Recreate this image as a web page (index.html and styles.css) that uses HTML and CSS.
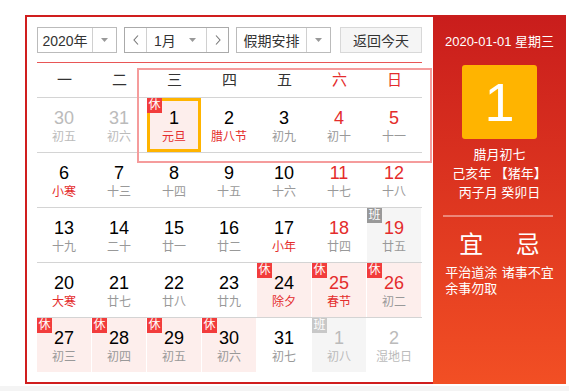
FILE: index.html
```html
<!DOCTYPE html>
<html lang="zh-CN">
<head>
<meta charset="utf-8">
<title>万年历</title>
<link rel="stylesheet" href="styles.css">
</head>
<body>
<div class="page">
  <div class="calendar">
    <div class="main">
      <div class="toolbar">
        <div class="sel year">
          <span class="sel-text">2020年</span>
          <span class="sel-arrow"><svg width="7" height="4" viewBox="0 0 7 4"><polygon points="0,0 7,0 3.5,4" fill="#999"/></svg></span>
        </div>
        <div class="sel month">
          <span class="nav prev"><svg width="6" height="10" viewBox="0 0 6 10"><polyline points="5,0.5 1,5 5,9.5" fill="none" stroke="#777" stroke-width="1.1"/></svg></span>
          <span class="month-mid"><span>1月</span><svg width="7" height="4" viewBox="0 0 7 4"><polygon points="0,0 7,0 3.5,4" fill="#999"/></svg></span>
          <span class="nav next"><svg width="6" height="10" viewBox="0 0 6 10"><polyline points="1,0.5 5,5 1,9.5" fill="none" stroke="#777" stroke-width="1.1"/></svg></span>
        </div>
        <div class="sel holiday">
          <span class="sel-text">假期安排</span>
          <span class="sel-arrow"><svg width="7" height="4" viewBox="0 0 7 4"><polygon points="0,0 7,0 3.5,4" fill="#999"/></svg></span>
        </div>
        <div class="btn-today">返回今天</div>
      </div>

      <div class="weekhead">
        <span>一</span><span>二</span><span>三</span><span>四</span><span>五</span><span class="red">六</span><span class="red">日</span>
      </div>

      <div class="week">
        <div class="cell other"><span class="num">30</span><span class="lun">初五</span></div>
        <div class="cell other"><span class="num">31</span><span class="lun">初六</span></div>
        <div class="cell rest selected"><i class="badge">休</i><span class="num">1</span><span class="lun red">元旦</span></div>
        <div class="cell"><span class="num">2</span><span class="lun red">腊八节</span></div>
        <div class="cell"><span class="num">3</span><span class="lun">初九</span></div>
        <div class="cell"><span class="num red">4</span><span class="lun">初十</span></div>
        <div class="cell"><span class="num red">5</span><span class="lun">十一</span></div>
      </div>
      <div class="week">
        <div class="cell"><span class="num">6</span><span class="lun red">小寒</span></div>
        <div class="cell"><span class="num">7</span><span class="lun">十三</span></div>
        <div class="cell"><span class="num">8</span><span class="lun">十四</span></div>
        <div class="cell"><span class="num">9</span><span class="lun">十五</span></div>
        <div class="cell"><span class="num">10</span><span class="lun">十六</span></div>
        <div class="cell"><span class="num red">11</span><span class="lun">十七</span></div>
        <div class="cell"><span class="num red">12</span><span class="lun">十八</span></div>
      </div>
      <div class="week">
        <div class="cell"><span class="num">13</span><span class="lun">十九</span></div>
        <div class="cell"><span class="num">14</span><span class="lun">二十</span></div>
        <div class="cell"><span class="num">15</span><span class="lun">廿一</span></div>
        <div class="cell"><span class="num">16</span><span class="lun">廿二</span></div>
        <div class="cell"><span class="num">17</span><span class="lun red">小年</span></div>
        <div class="cell"><span class="num red">18</span><span class="lun">廿四</span></div>
        <div class="cell work"><i class="badge">班</i><span class="num red">19</span><span class="lun">廿五</span></div>
      </div>
      <div class="week">
        <div class="cell"><span class="num">20</span><span class="lun red">大寒</span></div>
        <div class="cell"><span class="num">21</span><span class="lun">廿七</span></div>
        <div class="cell"><span class="num">22</span><span class="lun">廿八</span></div>
        <div class="cell"><span class="num">23</span><span class="lun">廿九</span></div>
        <div class="cell rest"><i class="badge">休</i><span class="num">24</span><span class="lun red">除夕</span></div>
        <div class="cell rest"><i class="badge">休</i><span class="num red">25</span><span class="lun red">春节</span></div>
        <div class="cell rest"><i class="badge">休</i><span class="num red">26</span><span class="lun">初二</span></div>
      </div>
      <div class="week last">
        <div class="cell rest"><i class="badge">休</i><span class="num">27</span><span class="lun">初三</span></div>
        <div class="cell rest"><i class="badge">休</i><span class="num">28</span><span class="lun">初四</span></div>
        <div class="cell rest"><i class="badge">休</i><span class="num">29</span><span class="lun">初五</span></div>
        <div class="cell rest"><i class="badge">休</i><span class="num">30</span><span class="lun">初六</span></div>
        <div class="cell"><span class="num">31</span><span class="lun">初七</span></div>
        <div class="cell other work"><i class="badge light">班</i><span class="num">1</span><span class="lun">初八</span></div>
        <div class="cell other"><span class="num">2</span><span class="lun">湿地日</span></div>
      </div>

      <div class="week-mark"></div>
    </div>

    <div class="panel">
      <div class="p-date">2020-01-01 星期三</div>
      <div class="p-day">1</div>
      <div class="p-lunar">
        <div>腊月初七</div>
        <div>己亥年 【猪年】</div>
        <div>丙子月 癸卯日</div>
      </div>
      <div class="p-divider"></div>
      <div class="p-yiji">
        <div class="yj-col">
          <div class="yj-head">宜</div>
          <div class="yj-items">平治道涂<br>余事勿取</div>
        </div>
        <div class="yj-col">
          <div class="yj-head">忌</div>
          <div class="yj-items">诸事不宜</div>
        </div>
      </div>
    </div>
  </div>
</div>
<div class="footer"></div>
</body>
</html>
```

FILE: styles.css
```css
* { box-sizing: border-box; }
html, body { margin: 0; padding: 0; background: #fff; }
body { font-family: "Liberation Sans", "Noto Sans CJK SC", sans-serif; color: #333; }

.page { padding-top: 15px; }
.calendar { display: flex; margin-left: 25px; height: 369px; }

.main {
  position: relative;
  width: 408px;
  border: 2px solid #d01e1e;
  border-right: 0;
  padding: 10px 11px 10px 10px;
}

/* toolbar */
.toolbar { display: flex; height: 26px; margin-bottom: 9px; font-size: 14px; }
.sel { display: flex; height: 26px; border: 1px solid #bbb; background: #fff; }
.sel-text { flex: 1; display: flex; align-items: center; justify-content: center; color: #333; }
.sel-arrow { width: 24px; border-left: 1px solid #d0d0d0; display: flex; align-items: center; justify-content: center; }
.year { width: 80px; }
.month { width: 105px; margin-left: 7px; border-color: #aaa; }
.holiday { width: 95px; margin-left: 7px; }
.nav { width: 22px; display: flex; align-items: center; justify-content: center; background: #fff; }
.prev { border-right: 1px solid #d0d0d0; }
.next { border-left: 1px solid #d0d0d0; }
.month-mid { flex: 1; display: flex; align-items: center; justify-content: space-between; padding: 0 10px 0 7px; color: #333; }
.btn-today {
  width: 82px; margin-left: 9px; height: 26px;
  border: 1px solid #d8d8d8; background: #f5f5f5;
  display: flex; align-items: center; justify-content: center; color: #333;
}

/* weekday header */
.weekhead {
  display: grid; grid-template-columns: repeat(7, 55px);
  height: 36px;
  border-top: 1px solid #e85656;
  border-bottom: 1px solid #d4d4d4;
  font-size: 15px; line-height: 34px; text-align: center; color: #333;
}

.red { color: #e42c2c !important; }

/* weeks */
.week {
  display: grid; grid-template-columns: repeat(7, 55px);
  height: 55px;
  border-bottom: 1px solid #d4d4d4;
}
.week.last { height: 54px; border-bottom: 0; }

.cell { position: relative; margin-right: 1px; padding-top: 10px; text-align: center; }
.num { display: block; font-size: 18px; line-height: 20px; color: #000; }
.lun { display: block; margin-top: 1px; font-size: 12px; line-height: 16px; color: #999; }
.other .num, .other .lun { color: #bbb; }

.rest { background: #fdeeec; }
.work { background: #f5f5f5; }
.selected { border: 3px solid #ffb400; padding-top: 7px; }

.badge {
  position: absolute; top: 0; left: 0;
  width: 15px; height: 15px;
  background: #f23c3c; color: #fff;
  font-style: normal; font-size: 12px; line-height: 15px; text-align: center;
}
.selected .badge { top: -3px; left: -3px; }
.work .badge { background: #999; }
.work .badge.light { background: #c8c8c8; }

.week-mark {
  position: absolute; left: 110px; top: 51px;
  width: 295px; height: 95px;
  border: 2px solid #f59c9c;
  pointer-events: none;
}

/* right panel */
.panel {
  width: 133px; height: 369px;
  background: linear-gradient(180deg, #c91d1c 0%, #f24f24 100%);
  color: #fff; text-align: center;
  padding: 18px 10px 0;
}
.p-date { font-size: 13px; line-height: 18px; white-space: nowrap; }
.p-day {
  width: 75px; height: 74px; margin: 14px auto 0;
  background: #ffb400; border-radius: 3px;
  font-size: 54px; line-height: 74px;
}
.p-lunar { margin-top: 6px; font-size: 13px; line-height: 19px; }
.p-divider { height: 2px; margin: 13px 3px 0 0; background: rgba(255, 255, 255, 0.4); }
.p-yiji { display: grid; grid-template-columns: 1fr 1fr; }
.yj-head { margin-top: 13px; font-size: 24px; line-height: 30px; }
.yj-items { margin-top: 5px; font-size: 13px; line-height: 16px; }

.footer { margin-top: 2px; height: 10px; background: #f4f4f4; }
```
